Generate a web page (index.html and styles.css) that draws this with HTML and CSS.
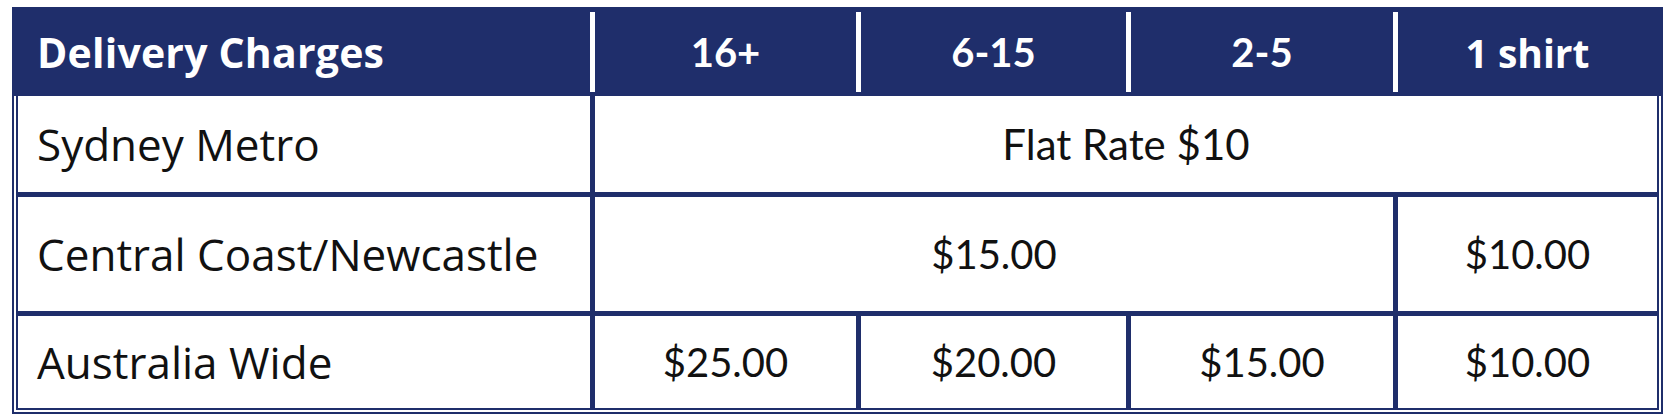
FILE: index.html
```html
<!DOCTYPE html>
<html>
<head>
<meta charset="utf-8">
<link rel="stylesheet" href="styles.css">
</head>
<body>
<div class="rates">
  <div class="head">
    <div class="hcell first">Delivery Charges</div>
    <div class="hcell num">16+</div>
    <div class="hcell num">6-15</div>
    <div class="hcell num">2-5</div>
    <div class="hcell">1 shirt</div>
  </div>
  <div class="grid">
    <div class="cell label">Sydney Metro</div>
    <div class="cell span4 flat">Flat Rate $10</div>
    <div class="cell label">Central Coast/Newcastle</div>
    <div class="cell span3 num">$15.00</div>
    <div class="cell num">$10.00</div>
    <div class="cell label">Australia Wide</div>
    <div class="cell num">$25.00</div>
    <div class="cell num">$20.00</div>
    <div class="cell num">$15.00</div>
    <div class="cell num">$10.00</div>
  </div>
</div>
</body>
</html>
```
FILE: styles.css
```css
html, body {
  margin: 0;
  background: #ffffff;
}
body {
  padding: 7px 0 0 12px;
  font-family: "Open Sans", Lato, sans-serif;
}
.rates {
  width: 1651px;
}
.head {
  background: #1f2e6b;
  display: grid;
  grid-template-columns: 572px 266px 270px 267px 264px;
  padding: 5px 6px 4px 6px;
  height: 89px;
  box-sizing: border-box;
}
.hcell {
  border-left: 5px solid #ffffff;
  color: #ffffff;
  font-weight: 700;
  font-size: 39px;
  display: flex;
  align-items: center;
  justify-content: center;
}
.hcell.num {
  font-family: Lato, "Open Sans", sans-serif;
  font-size: 40px;
}
.hcell.first {
  border-left: none;
  justify-content: flex-start;
  padding-left: 19px;
  font-size: 41px;
  letter-spacing: 0.2px;
}
.grid {
  display: grid;
  grid-template-columns: 572px 261px 265px 262px 259px;
  grid-template-rows: 96px 114px 92px;
  gap: 5px;
  background: #1f2e6b;
  border: 6px double #1f2e6b;
  border-top: none;
  background-clip: padding-box;
}
.cell {
  background: #ffffff;
  color: #111111;
  font-size: 44px;
  display: flex;
  align-items: center;
  justify-content: center;
}
.cell.num {
  font-family: Lato, "Open Sans", sans-serif;
  font-size: 40px;
}
.cell.flat {
  font-family: Lato, "Open Sans", sans-serif;
  font-size: 42px;
}
.cell.label {
  justify-content: flex-start;
  padding-left: 19px;
}
.span4 { grid-column: span 4; }
.span3 { grid-column: span 3; }
```
